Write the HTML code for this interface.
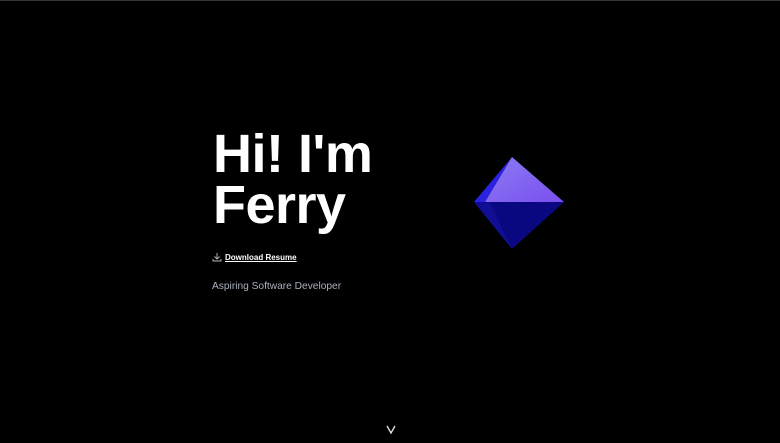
<!DOCTYPE html>
<html><head><style>
html,body{margin:0;padding:0;background:#000;width:780px;height:443px;overflow:hidden;font-family:"Liberation Sans",sans-serif;}
body{position:relative;border-top:1px solid #333;box-sizing:border-box;}
h1{position:absolute;left:213px;top:128px;margin:0;color:#fff;font-size:54px;line-height:51px;font-weight:bold;letter-spacing:-0.5px;}
.dl{position:absolute;left:212px;top:251px;color:#fff;font-size:8px;font-weight:bold;text-decoration:underline;display:flex;align-items:center;gap:3px;}
.sub{position:absolute;left:212px;top:280px;color:#aab0bd;font-size:10.2px;}
.chev{position:absolute;left:386px;top:424px;}
</style></head><body>
<h1>Hi! I'm<br>Ferry</h1>
<div class="dl"><svg width="10" height="10" viewBox="0 0 10 10"><path d="M5 1v6M2.5 4.5L5 7l2.5-2.5M1 7v2h8V7" stroke="#bbb" stroke-width="0.9" fill="none"/></svg><span>Download Resume</span></div>
<div class="sub">Aspiring Software Developer</div>
<svg style="position:absolute;left:0;top:0" width="780" height="443">
<defs><linearGradient id="g" x1="0" y1="0" x2="1" y2="1"><stop offset="0" stop-color="#8a7cf0"/><stop offset="1" stop-color="#7a4ff0"/></linearGradient></defs>
<polygon points="474,201 512,156 485,201" fill="#2a22e0"/>
<polygon points="485,201 512,156 564,201" fill="url(#g)"/>
<polygon points="474,201 564,201 512,248" fill="#0a0880"/>
<polygon points="474,201 490,202 512,248" fill="#120e94"/>
</svg>
<svg class="chev" width="10" height="9" viewBox="0 0 10 9"><path d="M1 1l4 7 4-7" stroke="#ddd" stroke-width="1.4" fill="none"/></svg>
</body></html>
